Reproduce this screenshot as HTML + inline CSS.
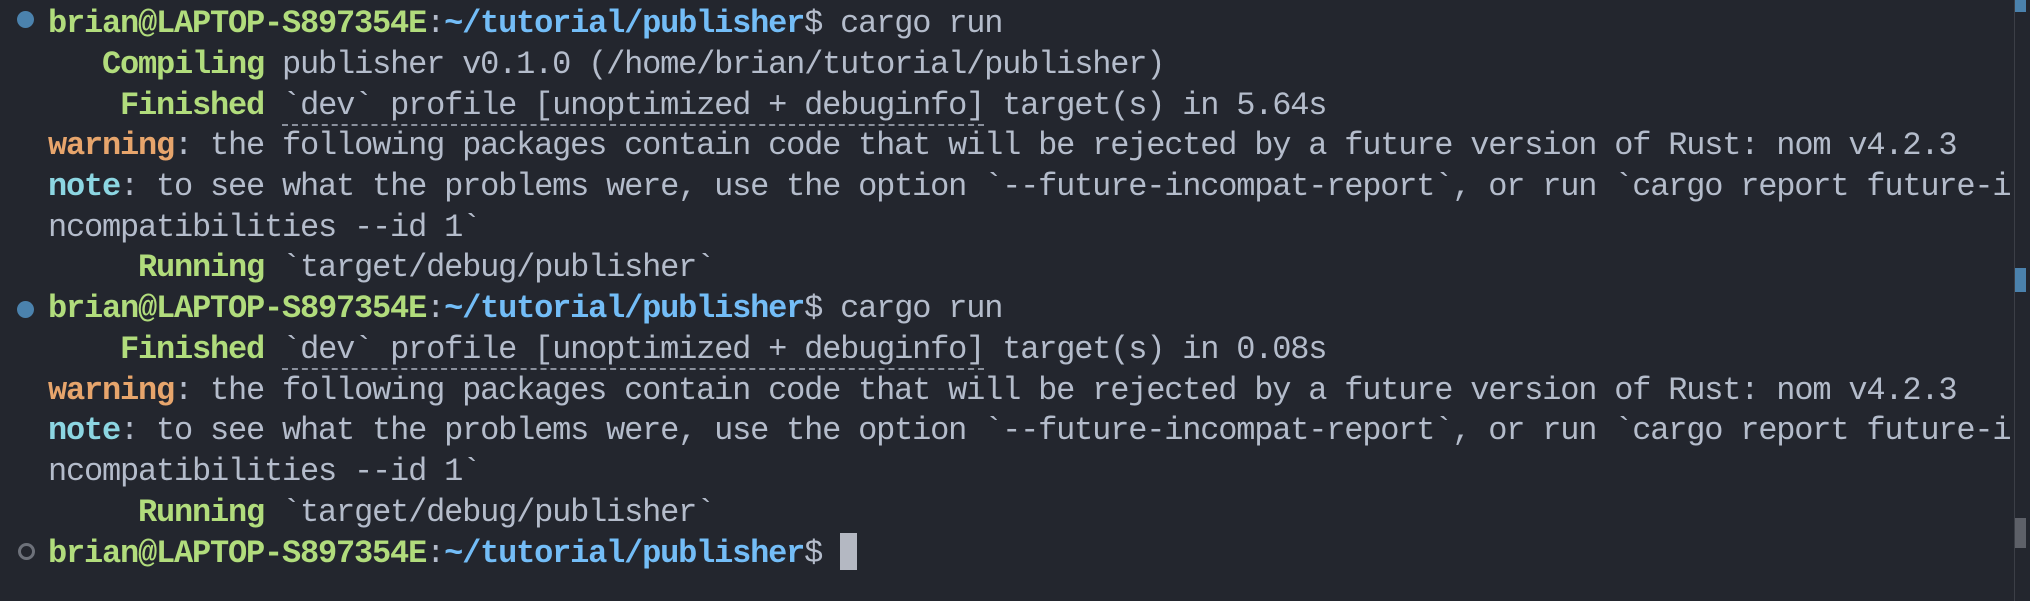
<!DOCTYPE html>
<html><head><meta charset="utf-8"><style>
html,body{margin:0;padding:0;}
body{width:2030px;height:601px;background:#23262e;overflow:hidden;position:relative;font-family:"Liberation Mono",monospace;font-size:32px;letter-spacing:-1.2px;color:#b4bccb;}
.l{position:absolute;left:48px;height:40px;line-height:40px;white-space:pre;}
.g{color:#b1dc7c;font-weight:bold;}
.b{color:#73bdf7;font-weight:bold;}
.o{color:#e7a56c;font-weight:bold;}
.c{color:#8cd6e2;font-weight:bold;}
.u{border-bottom:2px dashed #8a909c;}
.dot{position:absolute;left:17px;width:17px;height:17px;border-radius:50%;background:#4b82ad;}
.hol{position:absolute;left:18px;width:11px;height:11px;border-radius:50%;border:3px solid #6d717a;}
</style></head><body>
<div class="dot" style="top:11px"></div>
<div class="dot" style="top:301px"></div>
<div class="hol" style="top:543px"></div>
<div class="l" style="top:4px"><span class="g">brian@LAPTOP-S897354E</span>:<span class="b">~/tutorial/publisher</span>$ cargo run</div>
<div class="l" style="top:45px"><span class="g">   Compiling</span> publisher v0.1.0 (/home/brian/tutorial/publisher)</div>
<div class="l" style="top:86px"><span class="g">    Finished</span> <span class="u">`dev` profile [unoptimized + debuginfo]</span> target(s) in 5.64s</div>
<div class="l" style="top:126px"><span class="o">warning</span>: the following packages contain code that will be rejected by a future version of Rust: nom v4.2.3</div>
<div class="l" style="top:167px"><span class="c">note</span>: to see what the problems were, use the option `--future-incompat-report`, or run `cargo report future-i</div>
<div class="l" style="top:208px">ncompatibilities --id 1`</div>
<div class="l" style="top:248px"><span class="g">     Running</span> `target/debug/publisher`</div>
<div class="l" style="top:289px"><span class="g">brian@LAPTOP-S897354E</span>:<span class="b">~/tutorial/publisher</span>$ cargo run</div>
<div class="l" style="top:330px"><span class="g">    Finished</span> <span class="u">`dev` profile [unoptimized + debuginfo]</span> target(s) in 0.08s</div>
<div class="l" style="top:371px"><span class="o">warning</span>: the following packages contain code that will be rejected by a future version of Rust: nom v4.2.3</div>
<div class="l" style="top:411px"><span class="c">note</span>: to see what the problems were, use the option `--future-incompat-report`, or run `cargo report future-i</div>
<div class="l" style="top:452px">ncompatibilities --id 1`</div>
<div class="l" style="top:493px"><span class="g">     Running</span> `target/debug/publisher`</div>
<div class="l" style="top:534px"><span class="g">brian@LAPTOP-S897354E</span>:<span class="b">~/tutorial/publisher</span>$ </div>
<div style="position:absolute;left:840px;top:533px;width:17px;height:37px;background:#b4b8c2;"></div>
<div style="position:absolute;left:2014px;top:0;width:1px;height:601px;background:#3c3f47;"></div>
<div style="position:absolute;left:2015px;top:0;width:11px;height:12px;background:#4b82ad;"></div>
<div style="position:absolute;left:2015px;top:268px;width:11px;height:24px;background:#4b82ad;"></div>
<div style="position:absolute;left:2015px;top:518px;width:11px;height:30px;background:#5d6068;"></div>
</body></html>
